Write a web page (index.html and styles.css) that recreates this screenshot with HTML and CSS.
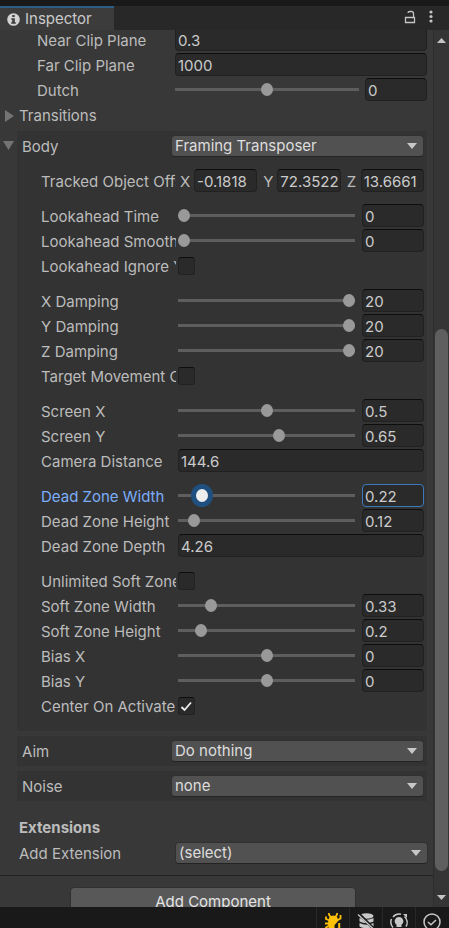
FILE: index.html
```html
<!DOCTYPE html>
<html lang="en">
<head>
<meta charset="utf-8">
<meta name="viewport" content="width=device-width, initial-scale=1">
<title>Inspector</title>
<link rel="stylesheet" href="styles.css">
</head>
<body>
<header class="tabbar">
  <div class="tab">
    <svg class="tab-icon" width="13" height="13" viewBox="0 0 13 13" aria-hidden="true"><circle cx="6.500" cy="6.500" r="6.300" fill="#d2d2d2"/><path d="M5.300 2h2.400v2H5.300zM4.300 5.200h3.500v4h1v1.600H4.200V9.200h1V6.700h-.9z" fill="#3c3c3c"/></svg>
    <h1 class="tab-title">Inspector</h1>
  </div>
  <div class="tab-tools">
    <button class="tool" aria-label="Lock"><svg width="12" height="14" viewBox="0 0 12 14"><path d="M1.500 7.500h9v5h-9zM9.500 7V3.500Q9.500 1.500 7.500 1.500H6Q4 1.500 4 3" fill="none" stroke="#c4c4c4" stroke-width="1.300"/></svg></button>
    <button class="tool" aria-label="Menu"><svg width="4" height="14" viewBox="0 0 4 14"><g fill="#c4c4c4"><circle cx="2" cy="2" r="1.600"/><circle cx="2" cy="6.500" r="1.600"/><circle cx="2" cy="11" r="1.600"/></g></svg></button>
  </div>
</header>

<div class="panel">
  <main class="content">
    <section class="lens">
      <div class="row"><label for="near">Near Clip Plane</label><input class="field" id="near" value="0.3"></div>
      <div class="row"><label for="far">Far Clip Plane</label><input class="field" id="far" value="1000"></div>
      <div class="row"><label for="dutch">Dutch</label><input type="range" class="slider" min="-180" max="180" value="0" aria-label="Dutch slider"><input class="field num" id="dutch" value="0"></div>
    </section>

    <button class="foldout"><svg width="10" height="12" viewBox="0 0 10 12"><path d="M1 0l9 6-9 6z" fill="#737373"/></svg>Transitions</button>

    <div class="stage">
      <button class="fold-arrow" aria-label="Collapse Body"><svg width="12" height="10" viewBox="0 0 12 10"><path d="M1 1h11L6.500 10z" fill="#737373"/></svg></button>
      <section class="box body-box">
        <div class="stage-row"><label for="body">Body</label><span class="drop"><select id="body"><option>Framing Transposer</option></select></span></div>
        <div class="props">
          <div class="group">
            <div class="row"><span class="name">Tracked Object Offset</span>
              <div class="vector">
                <label for="ox">X</label><input class="field" id="ox" value="-0.1818">
                <label for="oy">Y</label><input class="field" id="oy" value="72.3522">
                <label for="oz">Z</label><input class="field" id="oz" value="13.6661">
              </div>
            </div>
          </div>
          <div class="group">
            <div class="row"><label for="lt">Lookahead Time</label><input type="range" class="slider" min="0" max="1" step="0.01" value="0" aria-label="Lookahead Time slider"><input class="field num" id="lt" value="0"></div>
            <div class="row"><label for="ls">Lookahead Smoothing</label><input type="range" class="slider" min="0" max="30" value="0" aria-label="Lookahead Smoothing slider"><input class="field num" id="ls" value="0"></div>
            <div class="row"><label for="li">Lookahead Ignore Y</label><input type="checkbox" class="check" id="li"></div>
          </div>
          <div class="group">
            <div class="row"><label for="xd">X Damping</label><input type="range" class="slider" min="0" max="20" value="20" aria-label="X Damping slider"><input class="field num" id="xd" value="20"></div>
            <div class="row"><label for="yd">Y Damping</label><input type="range" class="slider" min="0" max="20" value="20" aria-label="Y Damping slider"><input class="field num" id="yd" value="20"></div>
            <div class="row"><label for="zd">Z Damping</label><input type="range" class="slider" min="0" max="20" value="20" aria-label="Z Damping slider"><input class="field num" id="zd" value="20"></div>
            <div class="row"><label for="tm">Target Movement Only</label><input type="checkbox" class="check" id="tm"></div>
          </div>
          <div class="group">
            <div class="row"><label for="sx">Screen X</label><input type="range" class="slider" min="-0.5" max="1.5" step="0.01" value="0.5" aria-label="Screen X slider"><input class="field num" id="sx" value="0.5"></div>
            <div class="row"><label for="sy">Screen Y</label><input type="range" class="slider" min="-0.5" max="1.5" step="0.01" value="0.65" aria-label="Screen Y slider"><input class="field num" id="sy" value="0.65"></div>
            <div class="row"><label for="cd">Camera Distance</label><input class="field" id="cd" value="144.6"></div>
          </div>
          <div class="group">
            <div class="row active"><label for="dw">Dead Zone Width</label><input type="range" class="slider" min="0" max="2" step="0.01" value="0.22" aria-label="Dead Zone Width slider"><input class="field num" id="dw" value="0.22"></div>
            <div class="row"><label for="dh">Dead Zone Height</label><input type="range" class="slider" min="0" max="2" step="0.01" value="0.12" aria-label="Dead Zone Height slider"><input class="field num" id="dh" value="0.12"></div>
            <div class="row"><label for="dd">Dead Zone Depth</label><input class="field" id="dd" value="4.26"></div>
          </div>
          <div class="group">
            <div class="row"><label for="us">Unlimited Soft Zone</label><input type="checkbox" class="check" id="us"></div>
            <div class="row"><label for="sw">Soft Zone Width</label><input type="range" class="slider" min="0" max="2" step="0.01" value="0.33" aria-label="Soft Zone Width slider"><input class="field num" id="sw" value="0.33"></div>
            <div class="row"><label for="sh">Soft Zone Height</label><input type="range" class="slider" min="0" max="2" step="0.01" value="0.2" aria-label="Soft Zone Height slider"><input class="field num" id="sh" value="0.2"></div>
            <div class="row"><label for="bx">Bias X</label><input type="range" class="slider" min="-0.5" max="0.5" step="0.01" value="0" aria-label="Bias X slider"><input class="field num" id="bx" value="0"></div>
            <div class="row"><label for="by">Bias Y</label><input type="range" class="slider" min="-0.5" max="0.5" step="0.01" value="0" aria-label="Bias Y slider"><input class="field num" id="by" value="0"></div>
            <div class="row"><label for="ca">Center On Activate</label><span class="check-wrap"><input type="checkbox" class="check" id="ca" checked><svg class="tick" width="17" height="18" viewBox="0 0 17 18" aria-hidden="true"><path d="M3.500 10l3 3 6.500-7.500" fill="none" stroke="#eee" stroke-width="1.800"/></svg></span></div>
          </div>
        </div>
      </section>
    </div>

    <section class="box"><div class="stage-row"><label for="aim">Aim</label><span class="drop"><select id="aim"><option>Do nothing</option></select></span></div></section>
    <section class="box"><div class="stage-row"><label for="noise">Noise</label><span class="drop"><select id="noise"><option>none</option></select></span></div></section>

    <section class="extensions">
      <h2>Extensions</h2>
      <div class="ext-row"><label for="ext">Add Extension</label><span class="drop"><select id="ext"><option>(select)</option></select></span></div>
    </section>

    <footer class="add"><button class="add-button">Add Component</button></footer>
  </main>

  <div class="scrollbar">
    <button class="scroll-arrow" aria-label="Scroll up"><svg width="9" height="5" viewBox="0 0 9 5"><path d="M4.500 0L9 5H0z" fill="#c4c4c4"/></svg></button>
    <div class="track"><div class="thumb"></div></div>
    <button class="scroll-arrow" aria-label="Scroll down"><svg width="9" height="5" viewBox="0 0 9 5"><path d="M0 0h9L4.500 5z" fill="#c4c4c4"/></svg></button>
  </div>
</div>

<div class="status">
  <button class="status-item" aria-label="Debugger"><svg width="18" height="18" viewBox="0 0 18 18"><g fill="none" stroke="#ffc107" stroke-width="1.800"><path d="M5 0Q4.500 2.500 7 4M13 0Q13.500 2.500 11 4M2 3.500V6l3.500 1.500M16.500 2v3.500L13 7.500M1 10.500h4M2 17v-2.500L4.500 13"/></g><path d="M5.500 4Q9 1 13 4L14.500 7.500 12 10.500 10.500 12v6H7Q4 15.500 4 11T5.500 4z" fill="#ffc107"/><path d="M15.200 10v8" stroke="#ffc107" stroke-width="2"/></svg></button>
  <button class="status-item" aria-label="Cache server"><svg width="18" height="18" viewBox="0 0 18 18"><g fill="#c8c8c8"><ellipse cx="9.500" cy="3" rx="7" ry="2.800"/><path d="M2.500 5q7 3.600 14 0v3.500q-7 3.600-14 0zM2.500 10q7 3.600 14 0v3.500q-7 3.600-14 0zM2.500 15q7 3.600 14 0V18h-14z"/></g><path d="M1 0l18 18" stroke="#191919" stroke-width="3"/><path d="M1 1.500l17 16" stroke="#c8c8c8" stroke-width="1.300"/></svg></button>
  <button class="status-item" aria-label="Auto lighting"><svg width="18" height="18" viewBox="0 0 18 18"><g fill="none" stroke="#c8c8c8" stroke-width="1.500"><path d="M11 1.300A8 8 0 0 0 3 4M1.500 6a8 8 0 0 0 1.500 8.500M4.500 16A8 8 0 0 0 7 17M14.500 3.500a8 8 0 0 1 1.500 10"/></g><path d="M13 1h4v4z" fill="#c8c8c8"/><path d="M9 4a4.300 4.300 0 0 1 2.500 7.800V14h-5v-2.200A4.300 4.300 0 0 1 9 4zM7 15h4v2H7z" fill="#c8c8c8"/></svg></button>
  <button class="status-item" aria-label="Background tasks"><svg width="18" height="18" viewBox="0 0 18 18"><g fill="none" stroke="#c8c8c8" stroke-width="1.500"><circle cx="9" cy="9" r="8"/><path d="M5 9l3 2.700L13 7"/></g></svg></button>
</div>
</body>
</html>
```

FILE: styles.css
```css
* {
  box-sizing: border-box;
}

body {
  margin: 0;
  height: 100vh;
  display: flex;
  flex-direction: column;
  overflow: hidden;
  background: #191919;
  color: #bcbcbc;
  font: 15px/20px Inter, "Liberation Sans", sans-serif;
}

button,
input,
select {
  font: inherit;
  color: inherit;
  margin: 0;
}

button {
  padding: 0;
  border: 0;
  background: none;
}

svg {
  display: block;
}

h1,
h2 {
  margin: 0;
  font-size: 15px;
}

/* Tab bar */
.tabbar {
  display: flex;
  justify-content: space-between;
  height: 24px;
  margin-top: 6px;
  flex: none;
  background: #282828;
}

.tab {
  display: flex;
  align-items: center;
  gap: 5px;
  width: 114px;
  padding-left: 7px;
  border-top: 2px solid #2c5d87;
  background: #3c3c3c;
}

.tab-title {
  font-weight: 400;
  color: #cacaca;
}

.tab-tools {
  display: flex;
  align-items: center;
  gap: 13px;
  padding: 0 16px 2px 0;
}

/* Panel */
.panel {
  display: flex;
  flex: 1;
  min-height: 0;
  overflow: hidden;
  background: #383838;
}

.content {
  flex: 1;
  min-width: 0;
  margin-top: -2px;
}

.lens,
.group {
  display: flex;
  flex-direction: column;
  gap: 2px;
}

.lens {
  padding: 0 6px 0 37px;
}

.row {
  display: flex;
  align-items: center;
  height: 23px;
}

.row > label,
.row > .name {
  flex: none;
  width: 135px;
  margin-right: 2px;
  padding-top: 2px;
  overflow: hidden;
  white-space: nowrap;
}

.lens .row > label {
  margin-right: 3px;
}

.field {
  flex: 1;
  min-width: 0;
  width: 0;
  height: 23px;
  padding: 2px 2px 0;
  border: 1px solid #212121;
  border-top-color: #0d0d0d;
  border-radius: 4px;
  outline: 0;
  background: #2a2a2a;
  color: #cacaca;
}

.field.num {
  flex: none;
  width: 62px;
  margin-left: 7px;
}

.lens .field.num {
  margin-left: 6px;
}

.vector {
  display: flex;
  flex: 1;
  align-items: center;
  min-width: 0;
  padding-left: 2px;
}

.vector label {
  flex: none;
  width: 14px;
  padding-top: 2px;
}

.vector label:not(:first-child) {
  width: 20px;
  padding-left: 6px;
}

/* Sliders */
.slider {
  appearance: none;
  flex: 1;
  min-width: 0;
  height: 23px;
  outline: 0;
  background: linear-gradient(#5e5e5e, #5e5e5e) center / 100% 3px no-repeat;
}

.slider::-webkit-slider-thumb {
  appearance: none;
  width: 12px;
  height: 13px;
  border-radius: 50%;
  background: #999;
}

.active > label {
  color: #7baefa;
}

.active .slider::-webkit-slider-thumb {
  background: #eee;
  box-shadow: 0 0 0 5px #20507f;
}

.active .field {
  border-color: #3a79bb;
}

/* Check boxes */
.check {
  appearance: none;
  width: 17px;
  height: 18px;
  border: 1px solid #212121;
  border-top-color: #0d0d0d;
  border-radius: 3px;
  background: #2a2a2a;
}

.check-wrap {
  display: grid;
}

.check-wrap > * {
  grid-area: 1 / 1;
}

.tick {
  pointer-events: none;
}

/* Drop-downs */
.drop {
  position: relative;
  display: flex;
  flex: 1;
  min-width: 0;
}

.drop::after {
  content: "";
  position: absolute;
  top: 8px;
  right: 7px;
  border: 5px solid transparent;
  border-top: 6px solid #c8c8c8;
  border-bottom: 0;
  pointer-events: none;
}

select {
  appearance: none;
  flex: 1;
  min-width: 0;
  height: 22px;
  padding: 0 20px 1px 3px;
  border: 1px solid #303030;
  border-bottom-color: #242424;
  border-radius: 4px;
  background: #515151;
  color: #dedede;
}

/* Stages */
.foldout {
  display: flex;
  align-items: center;
  gap: 5px;
  height: 23px;
  margin: 3px 0 4px;
  padding-left: 4px;
}

.stage {
  display: flex;
  align-items: flex-start;
}

.fold-arrow {
  width: 12px;
  margin: 9px 3px 0 2px;
}

.box {
  margin: 0 6px 5px 17px;
  background: #333;
}

.body-box {
  flex: 1;
  min-width: 0;
  margin-left: 0;
  padding-bottom: 14px;
}

.stage-row {
  display: flex;
  align-items: center;
  height: 30px;
  padding: 0 3px 0 5px;
}

.stage-row label {
  width: 149px;
  padding-top: 1px;
}

.props {
  display: flex;
  flex-direction: column;
  gap: 12px;
  padding: 8px 3px 0 24px;
}

/* Extensions */
.extensions {
  padding: 12px 6px 11px 19px;
  border-bottom: 1px solid #222;
}

.extensions h2 {
  line-height: 20px;
}

.ext-row {
  display: flex;
  align-items: center;
  height: 22px;
  margin-top: 4px;
}

.ext-row label {
  width: 156px;
  padding-top: 1px;
}

.ext-row .drop {
  margin-right: -1px;
}

.add {
  display: flex;
  justify-content: center;
  padding: 11px 7px 0 0;
}

.add-button {
  width: 286px;
  height: 30px;
  border: 1px solid #303030;
  border-radius: 4px;
  background: #585858;
  color: #e4e4e4;
}

/* Scroll bar */
.scrollbar {
  display: flex;
  flex-direction: column;
  flex: none;
  width: 16px;
  border-left: 1px solid #2e2e2e;
  background: #353535;
}

.scroll-arrow {
  display: flex;
  align-items: center;
  padding-left: 3px;
  height: 20px;
}

.track {
  display: flex;
  flex: 1;
  flex-direction: column;
  padding: 0 1px;
}

.track::before {
  content: "";
  flex: 279;
}

.track::after {
  content: "";
  flex: 16;
}

.thumb {
  flex: 542;
  border-radius: 7px;
  background: #5f5f5f;
}

/* Status bar */
.status {
  display: flex;
  justify-content: flex-end;
  flex: none;
  height: 21px;
  padding-right: 1px;
  overflow: hidden;
  background: #191919;
}

.status-item {
  display: flex;
  justify-content: center;
  align-items: flex-start;
  width: 33px;
  padding-top: 6px;
  border-left: 1px solid #282828;
}
```
